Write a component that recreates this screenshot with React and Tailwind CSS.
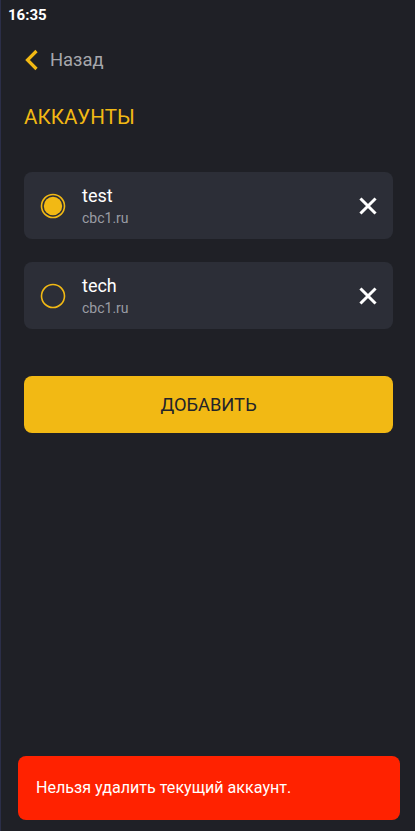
const accounts = [
  { name: 'test', host: 'cbc1.ru', active: true },
  { name: 'tech', host: 'cbc1.ru', active: false },
];

const Radio = ({ active }) => (
  <svg width="26" height="26" viewBox="0 0 26 26" className="shrink-0">
    <circle cx="13" cy="13" r="11.5" fill="none" stroke="#f2b914" strokeWidth="1.6" />
    {active && <circle cx="13" cy="13" r="9.2" fill="#f2b914" />}
  </svg>
);

const CloseIcon = () => (
  <svg width="18" height="18" viewBox="0 0 18 18">
    <path d="M2.5 2.5 L15.5 15.5 M15.5 2.5 L2.5 15.5" stroke="#fff" strokeWidth="3" strokeLinecap="square" />
  </svg>
);

const AccountRow = ({ account }) => (
  <div className="flex items-center h-[67px] rounded-lg bg-[#2c2e37] pl-[16px] pr-[16px]">
    <Radio active={account.active} />
    <div className="ml-[16px] flex flex-col flex-1 -mt-[1px]">
      <span className="text-[18px] leading-[21px] text-white">{account.name}</span>
      <span className="text-[14px] leading-[16px] mt-[4px] text-[#9a9ca4]">{account.host}</span>
    </div>
    <CloseIcon />
  </div>
);

export default function App() {
  return (
    <div
      className="relative w-[415px] h-[831px] bg-[#1f2026] border-l border-[#2b2e48] overflow-hidden"
      style={{ fontFamily: 'Roboto, "Noto Sans", sans-serif' }}
    >
      <div className="h-[30px] pl-[7px] pt-[5px] text-[15px] leading-[20px] font-bold text-white">16:35</div>

      <div className="flex items-center h-[30px] mt-[15px] pl-[23px]">
        <svg width="16" height="22" viewBox="0 0 16 22">
          <path d="M12.5 2 L3.5 11 L12.5 20" fill="none" stroke="#f2b914" strokeWidth="3.2" />
        </svg>
        <span className="ml-[10px] text-[18.4px] text-[#a6a7ac]">Назад</span>
      </div>

      <div className="mt-[27px] pl-[23px] text-[20.6px] leading-[30px] text-[#f2b914]">АККАУНТЫ</div>

      <div className="mt-[40px] pl-[23px] pr-[22px] flex flex-col gap-[23px]">
        {accounts.map((a) => (
          <AccountRow key={a.name} account={a} />
        ))}
      </div>

      <div className="ml-[23px] mr-[22px] mt-[47px] h-[57px] rounded-lg bg-[#f2b914] flex items-center justify-center text-[18.3px] text-[#23242a]">
        ДОБАВИТЬ
      </div>

      <div className="absolute left-[17px] right-[15px] top-[756px] h-[64px] rounded-lg bg-[#ff2200] flex items-center pl-[18px] text-[16.1px] text-white">
        Нельзя удалить текущий аккаунт.
      </div>
    </div>
  );
}
